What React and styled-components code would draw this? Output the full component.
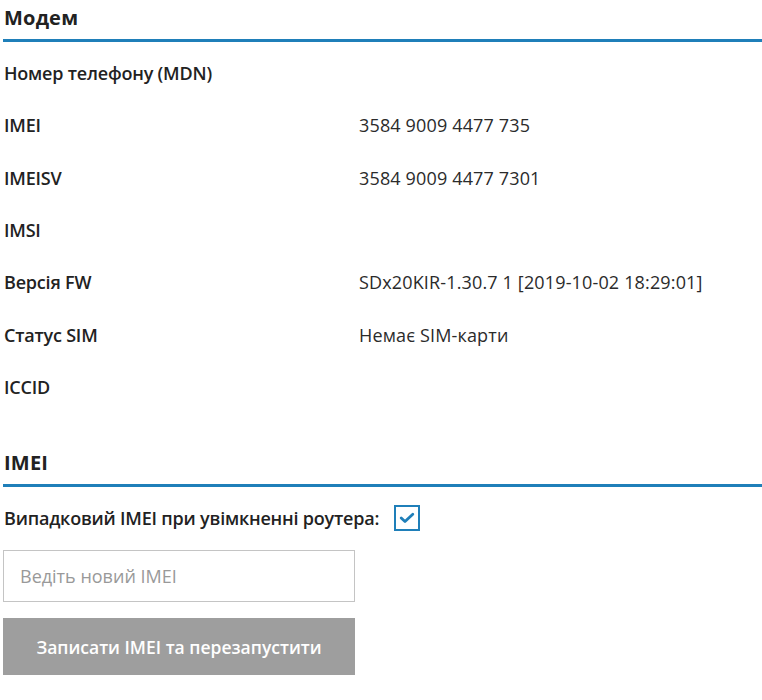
import React, { useState } from "react";
import styled, { createGlobalStyle } from "styled-components";

const GlobalStyle = createGlobalStyle`
  html, body {
    margin: 0;
    padding: 0;
    background: #fff;
  }
  body {
    font-family: "Open Sans", "Noto Sans", sans-serif;
    color: #222;
  }
`;

const modemRows = [
  { label: "Номер телефону (MDN)", value: "" },
  { label: "IMEI", value: "3584 9009 4477 735" },
  { label: "IMEISV", value: "3584 9009 4477 7301" },
  { label: "IMSI", value: "" },
  { label: "Версія FW", value: "SDx20KIR-1.30.7 1 [2019-10-02 18:29:01]" },
  { label: "Статус SIM", value: "Немає SIM-карти" },
  { label: "ICCID", value: "" },
];

const App = () => {
  const [randomImei, setRandomImei] = useState(true);

  return (
    <StyledPage>
      <GlobalStyle />
      <StyledSection>
        <StyledHeading>Модем</StyledHeading>
        <StyledList>
          {modemRows.map((row, idx) => (
            <StyledRow key={idx}>
              <StyledLabel>{row.label}</StyledLabel>
              <StyledValue>{row.value}</StyledValue>
            </StyledRow>
          ))}
        </StyledList>
      </StyledSection>

      <StyledSection>
        <StyledHeading>IMEI</StyledHeading>
        <StyledCheckRow>
          <StyledLabel>Випадковий IMEI при увімкненні роутера:</StyledLabel>
          <StyledCheckbox
            $checked={randomImei}
            onClick={() => setRandomImei((prev) => !prev)}
          >
            {randomImei && (
              <svg width="16" height="12" viewBox="0 0 16 12">
                <path
                  d="M2.2 6 L6 9.6 L13.8 2.2"
                  fill="none"
                  stroke="#1f7fb9"
                  strokeWidth="2.8"
                  strokeLinecap="round"
                  strokeLinejoin="round"
                />
              </svg>
            )}
          </StyledCheckbox>
        </StyledCheckRow>
        <StyledInput placeholder="Ведіть новий IMEI" />
        <StyledButton>Записати IMEI та перезапустити</StyledButton>
      </StyledSection>
    </StyledPage>
  );
};

const StyledPage = styled.div`
  padding: 0 0 0 3px;
  width: 759px;
`;

const StyledSection = styled.section`
  display: flex;
  flex-direction: column;
`;

const StyledHeading = styled.h2`
  margin: 0;
  padding: 4px 0 8px 1px;
  font-size: 20px;
  font-weight: 700;
  line-height: 27px;
  letter-spacing: 0.2px;
  color: #222;
  border-bottom: 3px solid #1f7fb9;
`;

const StyledList = styled.div`
  display: flex;
  flex-direction: column;
  padding: 18px 0 19px;
`;

const StyledRow = styled.div`
  display: grid;
  grid-template-columns: 356px 1fr;
  height: 52.33px;
  align-items: start;
`;

const StyledLabel = styled.span`
  padding-left: 1px;
  font-size: 18px;
  font-weight: 600;
  line-height: 26px;
  letter-spacing: -0.2px;
  color: #222;
  white-space: nowrap;
`;

const StyledValue = styled.span`
  font-size: 18px;
  font-weight: 400;
  line-height: 26px;
  letter-spacing: 0.15px;
  color: #2b2b2b;
  white-space: nowrap;
`;

const StyledCheckRow = styled.div`
  display: flex;
  align-items: center;
  gap: 15px;
  margin: 18px 0 19px;
`;

const StyledCheckbox = styled.span`
  width: 22px;
  height: 22px;
  border: 2px solid #1f7fb9;
  display: flex;
  align-items: center;
  justify-content: center;
  cursor: pointer;
  background: #fff;
`;

const StyledInput = styled.input`
  box-sizing: border-box;
  width: 352px;
  height: 52px;
  border: 1px solid #c4c4c4;
  padding: 0 16px;
  font-family: "Open Sans", "Noto Sans", sans-serif;
  font-size: 18px;
  color: #333;
  outline: none;
  &::placeholder {
    color: #999;
  }
`;

const StyledButton = styled.button`
  margin-top: 16px;
  width: 352px;
  height: 57px;
  border: none;
  background: #9e9e9e;
  color: #fff;
  font-family: "Open Sans", "Noto Sans", sans-serif;
  font-size: 17.5px;
  font-weight: 600;
  cursor: pointer;
`;

export default App;
